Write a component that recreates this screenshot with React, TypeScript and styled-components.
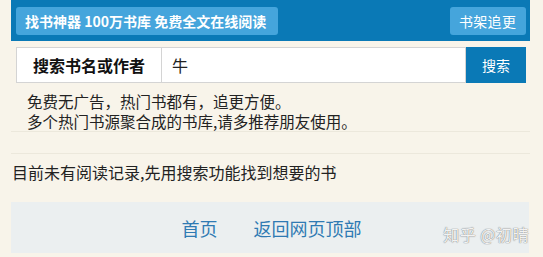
import React from "react";
import styled, { createGlobalStyle } from "styled-components";

const Global = createGlobalStyle`
  html, body { margin: 0; padding: 0; background: #f8f4ea; }
  body { font-family: "Noto Sans CJK SC", "Liberation Sans", sans-serif; }
`;

const Page = styled.div`
  width: 519px;
  margin-left: 11px;
  position: relative;
  height: 257px;
  overflow: hidden;
`;

const Header = styled.div`
  height: 41px;
  background: #0a79b6;
  display: flex;
  align-items: flex-start;
  justify-content: space-between;
  padding: 7px 4px 0 5px;
  box-sizing: border-box;
`;

const HeadButton = styled.div<{ $wide?: boolean }>`
  height: 28px;
  box-sizing: border-box;
  background: #45a5dc;
  color: #fff;
  border-radius: 3px;
  font-size: 14px;
  font-weight: ${(p) => (p.$wide ? 700 : 400)};
  line-height: 28px;
  padding: 0 9px;
  width: ${(p) => (p.$wide ? "262px" : "76px")};
  white-space: nowrap;
  letter-spacing: ${(p) => (p.$wide ? "0" : "0.3px")};
`;

const SearchRow = styled.div`
  display: flex;
  margin: 6px 4px 0 5px;
  height: 36px;
`;

const Label = styled.div`
  width: 146px;
  box-sizing: border-box;
  background: #fff;
  border: 1px solid #d4d4d4;
  font-size: 16px;
  font-weight: 700;
  color: #111;
  display: flex;
  align-items: center;
  justify-content: center;
`;

const Input = styled.div`
  flex: 1;
  box-sizing: border-box;
  background: #fff;
  border: 1px solid #d4d4d4;
  border-left: none;
  font-size: 16px;
  color: #222;
  display: flex;
  align-items: center;
  padding-left: 10px;
`;

const SearchButton = styled.div`
  width: 60px;
  background: #0a79b6;
  color: #fff;
  font-size: 14px;
  display: flex;
  align-items: center;
  justify-content: center;
`;

const Intro = styled.div`
  padding: 8px 0 0 16px;
  height: 40px;
  font-size: 15.5px;
  line-height: 20px;
  color: #222;
  border-bottom: 1px solid #ece8dc;
  white-space: nowrap;
`;

const Spacer = styled.div`
  height: 21px;
  border-bottom: 1px solid #ece8dc;
`;

const History = styled.div`
  padding: 8px 0 0 1px;
  height: 40px;
  font-size: 16px;
  line-height: 20px;
  color: #222;
`;

const Footer = styled.div`
  width: 518px;
  height: 51px;
  background: #ebeff0;
  display: flex;
  align-items: center;
  justify-content: center;
  gap: 36px;
  padding-left: 3px;
  box-sizing: border-box;
`;

const FootLink = styled.span`
  color: #2f7ab3;
  font-size: 18px;
`;

const Watermark = styled.div`
  position: absolute;
  right: 1px;
  top: 222px;
  color: rgba(255, 255, 255, 0.92);
  text-shadow: 0 0 1px rgba(110, 110, 110, 0.9), 0 0 1px rgba(110, 110, 110, 0.7);
  font-size: 16px;
  letter-spacing: 0.5px;
`;

export default function App() {
  return (
    <>
      <Global />
      <Page>
        <Header>
          <HeadButton $wide>找书神器 100万书库 免费全文在线阅读</HeadButton>
          <HeadButton>书架追更</HeadButton>
        </Header>
        <SearchRow>
          <Label>搜索书名或作者</Label>
          <Input>牛</Input>
          <SearchButton>搜索</SearchButton>
        </SearchRow>
        <Intro>
          免费无广告，热门书都有，追更方便。
          <br />
          多个热门书源聚合成的书库,请多推荐朋友使用。
        </Intro>
        <Spacer />
        <History>目前未有阅读记录,先用搜索功能找到想要的书</History>
        <Footer>
          <FootLink>首页</FootLink>
          <FootLink>返回网页顶部</FootLink>
        </Footer>
        <Watermark>知乎 @初晴</Watermark>
      </Page>
    </>
  );
}
